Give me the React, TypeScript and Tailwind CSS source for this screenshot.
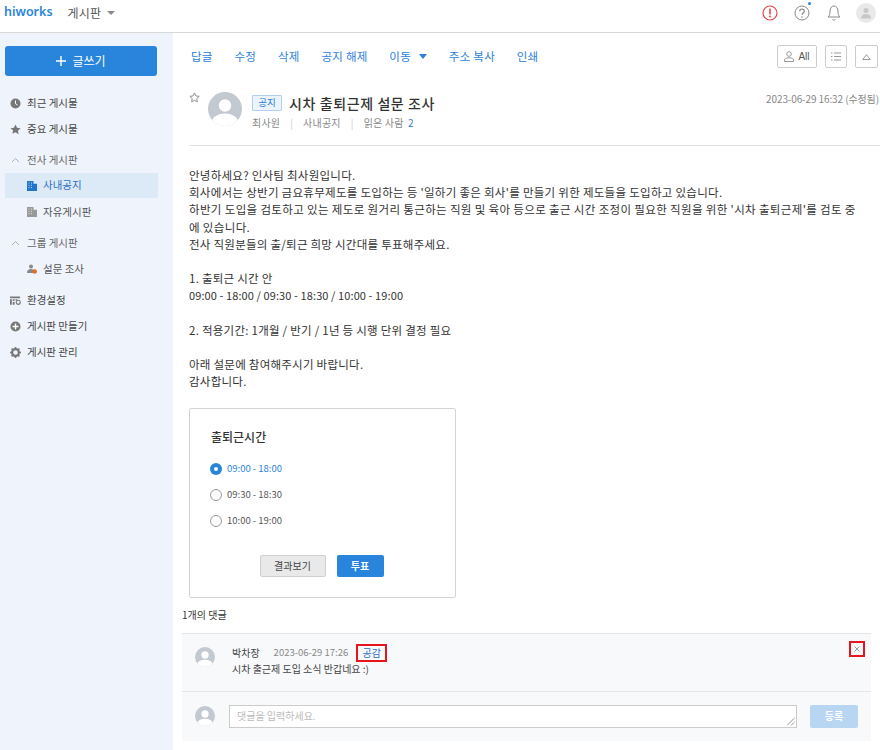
import React from "react";

const font = { fontFamily: '"Noto Sans CJK KR", "Liberation Sans", sans-serif' };

function Avatar({ size }: { size: number }) {
  return (
    <svg width={size} height={size} viewBox="0 0 34 34" className="shrink-0">
      <defs>
        <clipPath id={`av${size}`}>
          <circle cx="17" cy="17" r="17" />
        </clipPath>
      </defs>
      <g clipPath={`url(#av${size})`}>
        <rect width="34" height="34" fill="#c3c9d0" />
        <circle cx="17" cy="13.5" r="6.2" fill="#fff" />
        <ellipse cx="17" cy="30" rx="13" ry="8.5" fill="#fff" />
      </g>
    </svg>
  );
}

function SideIcon({ kind }: { kind: string }) {
  if (kind === "clock")
    return (
      <svg width="11" height="11" viewBox="0 0 11 11">
        <circle cx="5.5" cy="5.5" r="5" fill="#777" />
        <path d="M5.5 2.5V5.7L7.5 7" stroke="#fff" strokeWidth="1" fill="none" />
      </svg>
    );
  if (kind === "star")
    return (
      <svg width="11" height="11" viewBox="0 0 24 24">
        <path d="M12 1l3.400 7.200 7.600 1-5.600 5.400 1.400 7.900L12 18l-6.800 3.500 1.400-7.900L1 9.200l7.600-1z" fill="#777" />
      </svg>
    );
  if (kind === "plus")
    return (
      <svg width="11" height="11" viewBox="0 0 11 11">
        <circle cx="5.5" cy="5.5" r="5" fill="#777" />
        <path d="M5.5 2.5v6M2.5 5.5h6" stroke="#fff" strokeWidth="1.4" />
      </svg>
    );
  if (kind === "gear")
    return (
      <svg width="11" height="11" viewBox="0 0 11 11">
        <circle cx="5.5" cy="5.5" r="3.4" fill="none" stroke="#777" strokeWidth="2.2" />
        <path d="M5.500 0v2M5.500 9v2M0 5.500h2M9 5.500h2M1.600 1.600l1.400 1.400M8 8l1.400 1.400M1.600 9.400L3 8M8 3l1.400-1.400" stroke="#777" strokeWidth="1.6" />
      </svg>
    );
  if (kind === "settings")
    return (
      <svg width="12" height="11" viewBox="0 0 12 11">
        <path d="M0 1h11v2H0zM0 4h2v6H0zM3 4h2v2H3zM3 7h2v3H3zM6 4h2v1.500H6z" fill="#777" />
        <circle cx="9" cy="7.500" r="2.200" fill="none" stroke="#777" strokeWidth="1.200" />
      </svg>
    );
  return null;
}

function Building({ color }: { color: string }) {
  return (
    <svg width="10" height="10" viewBox="0 0 10 10">
      <path d="M0 0h6.500v2.800H10V10H0z" fill={color} />
      <path d="M1.500 2h1M4 2h1M1.500 4.300h1M4 4.300h1M1.500 6.600h1M4 6.600h1" stroke="#fff" strokeWidth="1" opacity=".75" />
    </svg>
  );
}

function Chevron() {
  return (
    <svg width="9" height="6" viewBox="0 0 9 6">
      <path d="M1 5l3.500-3.500L8 5" fill="none" stroke="#aab0b8" strokeWidth="1" />
    </svg>
  );
}

function MainItem({ kind, label }: { kind: string; label: string }) {
  return (
    <div className="flex h-[26px] items-center gap-[6px] pl-[10px] text-[#444]">
      <span className="flex w-[11px] justify-center">
        <SideIcon kind={kind} />
      </span>
      <span>{label}</span>
    </div>
  );
}

function Radio({ label, on }: { label: string; on?: boolean }) {
  return (
    <div className="flex h-[26px] items-center gap-[5px]">
      {on ? (
        <span className="flex h-[12px] w-[12px] items-center justify-center rounded-full bg-[#2985db]">
          <span className="h-[4px] w-[4px] rounded-full bg-white" />
        </span>
      ) : (
        <span className="h-[12px] w-[12px] rounded-full border border-[#999] bg-white" />
      )}
      <span className={`text-[9.500px] ${on ? "text-[#2985db]" : "text-[#555]"}`}>{label}</span>
    </div>
  );
}

const actions = ["답글", "수정", "삭제", "공지 해제"];

export default function App() {
  return (
    <div className="h-[750px] w-[880px] overflow-hidden bg-white text-[11px] leading-none text-[#333]" style={font}>
      <header className="flex h-[33px] items-center border-b border-[#d8d8d8] pb-[7px]">
        <span className="ml-[4px] text-[12.500px] font-semibold text-[#2985db]" style={{ fontFamily: '"Noto Sans", sans-serif' }}>
          hiworks
        </span>
        <span className="ml-[15px] text-[12px] tracking-[0.2px] text-[#555]">게시판</span>
        <span className="ml-[6px] mt-[1px] h-0 w-0 border-x-[4px] border-t-[4px] border-x-transparent border-t-[#888]" />
        <div className="ml-auto flex items-center gap-[16px] pr-[4px]">
          <svg width="16" height="16" viewBox="0 0 16 16">
            <circle cx="8" cy="8" r="7" fill="none" stroke="#e2494b" strokeWidth="1.200" />
            <path d="M8 3.500v6" stroke="#e2494b" strokeWidth="1.600" />
            <circle cx="8" cy="11.600" r="1" fill="#e2494b" />
          </svg>
          <div className="relative h-[16px] w-[16px]">
            <svg width="16" height="16" viewBox="0 0 16 16">
              <circle cx="8" cy="8" r="7" fill="none" stroke="#888" strokeWidth="1" />
              <path d="M5.700 6.200C5.700 3.500 10.300 3.500 10.300 6.200 10.300 8 8 8 8 10" fill="none" stroke="#888" strokeWidth="1.200" />
              <circle cx="8" cy="12" r=".8" fill="#888" />
            </svg>
            <span className="absolute -right-[1px] -top-[3px] h-[3px] w-[3px] rounded-full bg-[#2985db]" />
          </div>
          <svg width="16" height="18" viewBox="0 0 16 18">
            <path d="M2 13h12c-1.500-1.500-2-2.500-2-6 0-3-1.800-5-4-5S4 4 4 7c0 3.500-.5 4.500-2 6z" fill="none" stroke="#888" strokeWidth="1" />
            <path d="M6.500 15.500c.8.800 2.200.800 3 0" fill="none" stroke="#888" strokeWidth="1" />
          </svg>
          <span className="-ml-[2px] flex h-[20px] w-[20px] items-center justify-center overflow-hidden rounded-full bg-[#e9e9e9]">
            <svg width="12" height="12" viewBox="0 0 12 12">
              <circle cx="6" cy="3.500" r="2.500" fill="#c8c8c8" />
              <path d="M1 11.500c0-3 2-4.500 5-4.500s5 1.500 5 4.500z" fill="#c8c8c8" />
            </svg>
          </span>
        </div>
      </header>

      <div className="flex h-[717px]">
        <aside className="h-full w-[173px] shrink-0 bg-[#eff4fc] pt-[13px] text-[10.500px]">
          <button className="ml-[5px] flex h-[30px] w-[152px] items-center justify-center gap-[6px] rounded-[3px] bg-[#2985db] text-[12px] text-white">
            <svg width="10" height="10" viewBox="0 0 10 10">
              <path d="M5 0v10M0 5h10" stroke="#fff" strokeWidth="1.400" />
            </svg>
            글쓰기
          </button>
          <div className="mt-[14px]">
            <MainItem kind="clock" label="최근 게시물" />
            <MainItem kind="star" label="중요 게시물" />
            <div className="mt-[5px] flex h-[26px] items-center gap-[7px] pl-[11px] text-[#666]">
              <Chevron />
              <span>전사 게시판</span>
            </div>
            <div className="ml-[5px] flex h-[25px] w-[153px] items-center gap-[6px] bg-[#dce9f7] pl-[22px] text-[#2b6fc0]">
              <Building color="#1f74cf" />
              <span>사내공지</span>
            </div>
            <div className="ml-[5px] mt-[1px] flex h-[26px] items-center gap-[6px] pl-[22px] text-[#555]">
              <Building color="#999" />
              <span>자유게시판</span>
            </div>
            <div className="mt-[5px] flex h-[26px] items-center gap-[7px] pl-[11px] text-[#666]">
              <Chevron />
              <span>그룹 게시판</span>
            </div>
            <div className="ml-[5px] flex h-[26px] items-center gap-[6px] pl-[22px] text-[#555]">
              <svg width="10" height="10" viewBox="0 0 10 10">
                <circle cx="4" cy="2.500" r="2" fill="#888" />
                <path d="M0 9c0-3 1.500-4 4-4s3 .8 3 1.500V9z" fill="#888" />
                <circle cx="7.800" cy="7.500" r="2.200" fill="#e0701f" />
              </svg>
              <span>설문 조사</span>
            </div>
            <div className="mt-[5px]">
              <MainItem kind="settings" label="환경설정" />
              <MainItem kind="plus" label="게시판 만들기" />
              <MainItem kind="gear" label="게시판 관리" />
            </div>
          </div>
        </aside>

        <main className="relative min-w-0 flex-1 pl-[16px]">
          <div className="flex h-[47px] items-center text-[11.500px] tracking-[0.25px] text-[#2b7fd8]">
            <div className="flex items-center gap-[21.800px] pl-[2px]">
              {actions.map((a) => (
                <span key={a}>{a}</span>
              ))}
              <span className="flex items-center gap-[8px]">
                이동
                <span className="h-0 w-0 border-x-[4px] border-t-[5px] border-x-transparent border-t-[#2b7fd8]" />
              </span>
              <span>주소 복사</span>
              <span>인쇄</span>
            </div>
            <div className="ml-auto flex items-center gap-[8px] pr-[2px]">
              <span className="flex h-[23px] w-[40px] items-center justify-center gap-[4px] rounded-[2px] border border-[#ccc] text-[10px] font-normal tracking-normal text-[#555]" style={{ fontFamily: '"Liberation Sans", sans-serif' }}>
                <svg width="10" height="11" viewBox="0 0 10 11">
                  <circle cx="5" cy="3" r="2.300" fill="none" stroke="#999" />
                  <path d="M.5 10.500V9C.5 7.500 2 6.800 5 6.800S9.500 7.500 9.500 9v1.500z" fill="none" stroke="#999" />
                </svg>
                All
              </span>
              <span className="flex h-[23px] w-[22px] items-center justify-center rounded-[2px] border border-[#ccc]">
                <svg width="10" height="9" viewBox="0 0 10 9">
                  <path d="M0 1h1.500M3 1h7M0 4.500h1.500M3 4.500h7M0 8h1.500M3 8h7" stroke="#999" />
                </svg>
              </span>
              <span className="flex h-[23px] w-[23px] items-center justify-center rounded-[2px] border border-[#ccc]">
                <svg width="9" height="6" viewBox="0 0 9 6">
                  <path d="M4.500.7L8.300 5.500H.7z" fill="none" stroke="#999" />
                </svg>
              </span>
            </div>
          </div>

          <div className="flex h-[66px] border-b border-[#e3e3e3]">
            <svg width="11" height="11" viewBox="0 0 24 24" className="mt-[12px] shrink-0">
              <path d="M12 2l3.100 6.600 7 .900-5.100 4.900 1.300 7.100L12 18.100l-6.300 3.400 1.300-7.100L1.900 9.500l7-.900z" fill="none" stroke="#888" strokeWidth="2" />
            </svg>
            <div className="ml-[8px] mt-[12px]">
              <Avatar size={34} />
            </div>
            <div className="ml-[10px] flex flex-col pt-[15px]">
              <div className="flex items-center">
                <span className="flex h-[16px] w-[30px] items-center justify-center rounded-[1px] border border-[#b5cdee] bg-[#ebf3fd] text-[9.500px] text-[#2b7fd8]">
                  공지
                </span>
                <span className="ml-[7px] text-[14px] font-medium tracking-[0.6px] text-[#333]">시차 출퇴근제 설문 조사</span>
              </div>
              <div className="mt-[7px] flex items-center text-[10px] tracking-[0.2px] text-[#888]">
                <span>최사원</span>
                <span className="mx-[10px] text-[#ccc]">|</span>
                <span>사내공지</span>
                <span className="mx-[10px] text-[#ccc]">|</span>
                <span>
                  읽은 사람 <span className="ml-[2px] text-[#2b7fd8]">2</span>
                </span>
              </div>
            </div>
            <span className="ml-auto mt-[14px] pr-[1px] text-[10px] tracking-[-0.1px] text-[#888]">2023-06-29 16:32 (수정됨)</span>
          </div>

          <div className="mt-[21px] w-[675px] text-[11.500px] leading-[17.200px] tracking-[0.25px] text-[#333]">
            <p>안녕하세요? 인사팀 최사원입니다.</p>
            <p className="tracking-[0.28px]">회사에서는 상반기 금요휴무제도를 도입하는 등 '일하기 좋은 회사'를 만들기 위한 제도들을 도입하고 있습니다.</p>
            <p className="tracking-[0.35px]">하반기 도입을 검토하고 있는 제도로 원거리 통근하는 직원 및 육아 등으로 출근 시간 조정이 필요한 직원을 위한 '시차 출퇴근제'를 검토 중에 있습니다.</p>
            <p>전사 직원분들의 출/퇴근 희망 시간대를 투표해주세요.</p>
            <p className="mt-[17.200px]">1. 출퇴근 시간 안</p>
            <p className="text-[11px] tracking-[0.1px]">09:00 - 18:00 / 09:30 - 18:30 / 10:00 - 19:00</p>
            <p className="mt-[17.200px]">2. 적용기간: 1개월 / 반기 / 1년 등 시행 단위 결정 필요</p>
            <p className="mt-[17.200px]">아래 설문에 참여해주시기 바랍니다.</p>
            <p>감사합니다.</p>
          </div>

          <div className="mt-[17.300px] h-[190px] w-[267px] rounded-[2px] border border-[#d4d4d4] px-[20px] pt-[22px]">
            <div className="ml-[1px] text-[12px] font-medium text-[#333]">출퇴근시간</div>
            <div className="mt-[13px]">
              <Radio on label="09:00 - 18:00" />
              <Radio label="09:30 - 18:30" />
              <Radio label="10:00 - 19:00" />
            </div>
            <div className="mr-[2px] mt-[21px] flex justify-center gap-[11px]">
              <span className="flex h-[22px] w-[66px] items-center justify-center rounded-[2px] border border-[#d0d0d0] bg-[#e9e9e9] text-[10px] text-[#444]">
                결과보기
              </span>
              <span className="flex h-[22px] w-[47px] items-center justify-center rounded-[2px] bg-[#2985db] text-[10px] font-bold text-white">
                투표
              </span>
            </div>
          </div>

          <div className="-ml-[7px] mt-[12px] text-[10px]">
            <span>1개의 댓글</span>
          </div>

          <section className="-ml-[7px] mt-[13px] h-[108px] w-[689px] border-t border-[#e5e5e5] bg-[#f8f9fb]">
            <div className="relative flex h-[58px] border-b border-[#e5e5e5] pl-[13px] pt-[13px]">
              <Avatar size={20} />
              <div className="ml-[17px] -mt-[3px]">
                <div className="flex h-[18px] items-center text-[10px]">
                  <span className="text-[#444]">박차장</span>
                  <span className="ml-[14px] text-[9.500px] text-[#888]">2023-06-29 17:26</span>
                  <span className="ml-[8px] flex h-[18px] w-[31px] items-center justify-center border-2 border-[#e8141c] text-[#2b6fc0]">
                    공감
                  </span>
                </div>
                <div className="mt-[2px] text-[10px] text-[#444]">시차 출근제 도입 소식 반갑네요 :)</div>
              </div>
              <span className="absolute right-[6px] top-[7px] flex h-[16px] w-[16px] items-center justify-center border-2 border-[#e8141c]">
                <svg width="6" height="6" viewBox="0 0 6 6">
                  <path d="M.5.5l5 5M5.500.5l-5 5" stroke="#999" />
                </svg>
              </span>
            </div>
            <div className="flex items-center pl-[13px] pt-[13px]">
              <Avatar size={20} />
              <div className="relative ml-[14px] flex h-[23px] w-[568px] items-center border border-[#ccc] bg-white pl-[7px] text-[10px] text-[#bbb]">
                댓글을 입력하세요.
                <svg width="9" height="9" viewBox="0 0 9 9" className="absolute bottom-[1px] right-[1px]">
                  <path d="M8.500 1L1 8.500M8.500 5L5 8.500" stroke="#666" strokeDasharray="1 .5" />
                </svg>
              </div>
              <span className="ml-[13px] flex h-[23px] w-[48px] items-center justify-center rounded-[2px] bg-[#b8d6f1] text-[10px] font-bold text-white">
                등록
              </span>
            </div>
          </section>
        </main>
      </div>
    </div>
  );
}
